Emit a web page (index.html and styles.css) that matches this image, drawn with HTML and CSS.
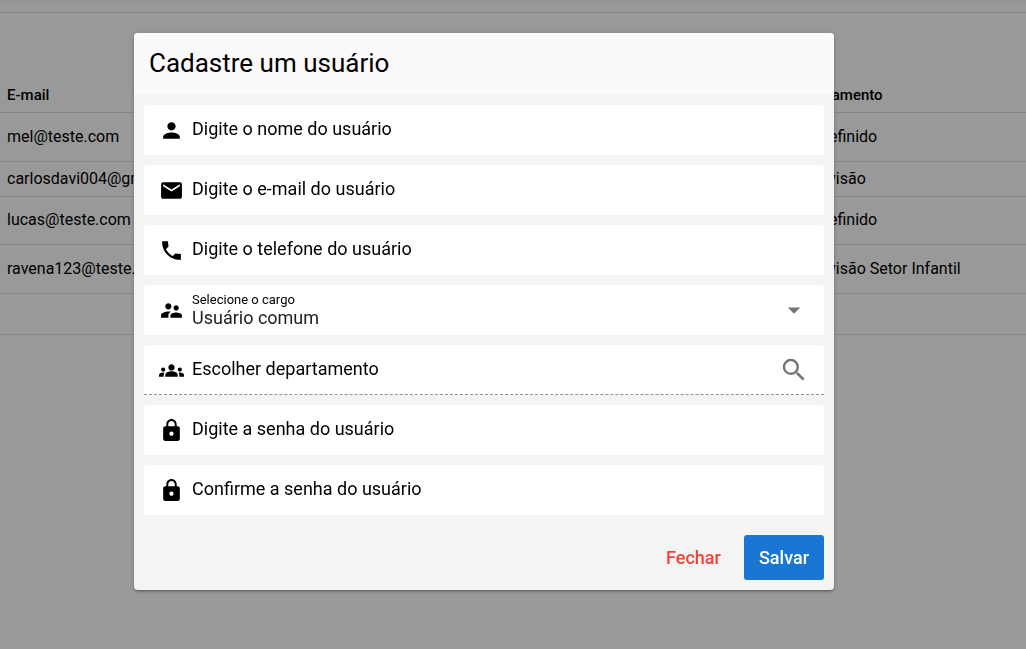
FILE: index.html
```html
<!DOCTYPE html>
<html lang="pt-BR">
<head>
<meta charset="utf-8">
<meta name="viewport" content="width=device-width, initial-scale=1">
<title>Cadastre um usuário</title>
<link rel="stylesheet" href="styles.css">
</head>
<body>
<main class="page">
  <div class="toolbar"></div>
  <table class="users">
    <colgroup><col class="col-email"><col></colgroup>
    <thead>
      <tr><th>E-mail</th><th>Departamento</th></tr>
    </thead>
    <tbody>
      <tr class="tall"><td>mel@teste.com</td><td>Não definido</td></tr>
      <tr class="short"><td>carlosdavi004@gmail.com</td><td>Supervisão</td></tr>
      <tr><td>lucas@teste.com</td><td>Não definido</td></tr>
      <tr class="tall"><td>ravena123@teste.com</td><td>Supervisão Setor Infantil</td></tr>
    </tbody>
  </table>
  <div class="table-footer"></div>
</main>

<div class="backdrop">
  <form class="dialog" role="dialog" aria-labelledby="dialog-title">
    <header class="dialog-header"><h1 id="dialog-title">Cadastre um usuário</h1></header>
    <div class="fields">
      <div class="field">
        <svg class="icon" viewBox="0 0 24 24" aria-hidden="true"><path d="M12 12c2.21 0 4-1.79 4-4s-1.790-4-4-4-4 1.790-4 4 1.790 4 4 4zm0 2c-2.670 0-8 1.340-8 4v2h16v-2c0-2.660-5.330-4-8-4z"/></svg>
        <div class="control"><label for="nome">Digite o nome do usuário</label><input id="nome" type="text"></div>
      </div>
      <div class="field">
        <svg class="icon" viewBox="0 0 24 24" aria-hidden="true"><path d="M20 4H4c-1.100 0-1.990.9-1.990 2L2 18c0 1.100.9 2 2 2h16c1.100 0 2-.9 2-2V6c0-1.100-.9-2-2-2zm0 4l-8 5-8-5V6l8 5 8-5v2z"/></svg>
        <div class="control"><label for="email">Digite o e-mail do usuário</label><input id="email" type="email"></div>
      </div>
      <div class="field">
        <svg class="icon" viewBox="0 0 24 24" aria-hidden="true"><path d="M21 15.460l-5.270-.610-2.520 2.520a15.045 15.045 0 0 1-6.590-6.590l2.530-2.530L8.540 3H3.030C2.450 13.180 10.820 21.550 21 20.970v-5.510z"/></svg>
        <div class="control"><label for="telefone">Digite o telefone do usuário</label><input id="telefone" type="tel"></div>
      </div>
      <div class="field">
        <svg class="icon" viewBox="0 0 24 24" aria-hidden="true"><path d="M16.500 12c1.380 0 2.490-1.120 2.490-2.500S17.880 7 16.500 7 14 8.120 14 9.500s1.120 2.500 2.500 2.500zM9 11c1.660 0 2.990-1.340 2.990-3S10.660 5 9 5 6 6.340 6 8s1.340 3 3 3zm7.500 3c-1.830 0-5.500.920-5.500 2.750V19h11v-2.250c0-1.830-3.670-2.750-5.500-2.750zM9 13c-2.330 0-7 1.170-7 3.500V19h7v-2.250c0-.850.330-2.340 2.370-3.470C10.500 13.100 9.660 13 9 13z"/></svg>
        <div class="choice"><label for="cargo">Selecione o cargo</label>
          <select id="cargo"><option>Usuário comum</option><option>Administrador</option></select>
        </div>
        <svg class="action-icon" viewBox="0 0 24 24" aria-hidden="true"><path d="M7 10l5 5 5-5z"/></svg>
      </div>
      <div class="field readonly">
        <svg class="icon" viewBox="0 0 24 24" aria-hidden="true"><path d="M12 12.750c1.630 0 3.070.390 4.240.9 1.080.480 1.760 1.560 1.760 2.730V18H6v-1.610c0-1.180.680-2.260 1.760-2.730 1.170-.520 2.610-.910 4.240-.910zM4 13c1.100 0 2-.9 2-2s-.9-2-2-2-2 .9-2 2 .9 2 2 2zm1.130 1.100C4.760 14.040 4.390 14 4 14c-.990 0-1.930.210-2.780.580A2.010 2.010 0 0 0 0 16.430V18h4.500v-1.610c0-.830.230-1.610.630-2.290zM20 13c1.100 0 2-.9 2-2s-.9-2-2-2-2 .9-2 2 .9 2 2 2zm4 3.430c0-.810-.480-1.530-1.220-1.850A6.950 6.950 0 0 0 20 14c-.390 0-.760.040-1.130.1.400.680.630 1.460.630 2.290V18H24v-1.570zM12 6c1.660 0 3 1.340 3 3s-1.340 3-3 3-3-1.340-3-3 1.340-3 3-3z"/></svg>
        <div class="control"><label for="departamento">Escolher departamento</label><input id="departamento" type="text" readonly></div>
        <button class="search" type="button" aria-label="Pesquisar departamento"><svg class="action-icon" viewBox="0 0 24 24" aria-hidden="true"><path d="M15.500 14h-.790l-.280-.270A6.471 6.471 0 0 0 16 9.500 6.500 6.500 0 1 0 9.500 16c1.610 0 3.090-.590 4.230-1.570l.270.280v.790l5 4.990L20.490 19l-4.990-5zm-6 0C7.010 14 5 11.990 5 9.500S7.010 5 9.500 5 14 7.010 14 9.500 11.990 14 9.500 14z"/></svg></button>
      </div>
      <div class="field">
        <svg class="icon" viewBox="0 0 24 24" aria-hidden="true"><path d="M18 8h-1V6c0-2.760-2.240-5-5-5S7 3.240 7 6v2H6c-1.100 0-2 .9-2 2v10c0 1.100.9 2 2 2h12c1.100 0 2-.9 2-2V10c0-1.100-.9-2-2-2zm-6 9c-1.100 0-2-.9-2-2s.9-2 2-2 2 .9 2 2-.9 2-2 2zm3.100-9H8.900V6c0-1.710 1.390-3.100 3.100-3.100s3.100 1.390 3.100 3.100v2z"/></svg>
        <div class="control"><label for="senha">Digite a senha do usuário</label><input id="senha" type="password"></div>
      </div>
      <div class="field">
        <svg class="icon" viewBox="0 0 24 24" aria-hidden="true"><path d="M18 8h-1V6c0-2.760-2.240-5-5-5S7 3.240 7 6v2H6c-1.100 0-2 .9-2 2v10c0 1.100.9 2 2 2h12c1.100 0 2-.9 2-2V10c0-1.100-.9-2-2-2zm-6 9c-1.100 0-2-.9-2-2s.9-2 2-2 2 .9 2 2-.9 2-2 2zm3.100-9H8.900V6c0-1.710 1.390-3.100 3.100-3.100s3.100 1.390 3.100 3.100v2z"/></svg>
        <div class="control"><label for="confirma">Confirme a senha do usuário</label><input id="confirma" type="password"></div>
      </div>
    </div>
    <footer class="actions">
      <button class="btn btn-close" type="button">Fechar</button>
      <button class="btn btn-save" type="submit">Salvar</button>
    </footer>
  </form>
</div>
</body>
</html>
```

FILE: styles.css
```css
* { box-sizing: border-box; }

body {
  margin: 0;
  background: #fff;
  color: #000;
  font-family: Roboto, sans-serif;
  font-size: 16px;
}

button, input, select {
  margin: 0;
  padding: 0;
  border: 0;
  background: none;
  color: inherit;
  font: inherit;
}

.toolbar {
  height: 13px;
  border-bottom: 1px solid #dedede;
  background: linear-gradient(#f6f6f6, #fff 3px);
}

.users {
  width: 100%;
  margin-top: 64px;
  table-layout: fixed;
  border-collapse: separate;
  border-spacing: 0;
}

.col-email { width: 76%; }

.users th,
.users td {
  height: 48px;
  padding: 0 7px 2px;
  border-bottom: 1px solid #dedede;
  text-align: left;
  white-space: nowrap;
}

.users th {
  height: 36px;
  padding-bottom: 0;
  font-size: 15px;
  font-weight: 500;
}

.users .tall td { height: 49px; }
.users .short td { height: 35px; }

.table-footer {
  height: 41px;
  border-bottom: 1px solid #dedede;
}

.backdrop {
  position: fixed;
  inset: 0;
  display: flex;
  align-items: flex-start;
  justify-content: center;
  padding: 33px 58px 0 0;
  overflow: auto;
  background: rgba(0, 0, 0, 0.4);
}

.dialog {
  width: 100%;
  max-width: 700px;
  overflow: hidden;
  border-radius: 4px;
  background: #f4f4f4;
  box-shadow: 0 1px 5px rgba(0, 0, 0, 0.2), 0 2px 2px rgba(0, 0, 0, 0.14), 0 3px 1px -2px rgba(0, 0, 0, 0.12);
}

.dialog-header {
  padding: 14px 15px 16px;
  background: #fafafa;
}

.dialog-header h1 {
  margin: 0;
  font-size: 26px;
  font-weight: 400;
  line-height: 32px;
}

.fields {
  display: grid;
  gap: 10px;
  padding: 10px;
}

.field {
  display: flex;
  align-items: center;
  height: 50px;
  padding: 0 15px;
  border-radius: 4px 4px 0 0;
  background: #fff;
}

.readonly { border-bottom: 1px dashed #929292; }

.icon {
  flex: none;
  width: 25px;
  height: 25px;
  margin: 1px 8px 0 0;
}

.action-icon {
  display: block;
  flex: none;
  width: 30px;
  height: 30px;
  fill: #757575;
}

.control {
  display: grid;
  flex: 1;
  align-items: center;
  font-size: 18px;
  line-height: 24px;
}

.control label,
.control input {
  grid-area: 1 / 1;
  min-width: 0;
}

.control label {
  padding-bottom: 2px;
  pointer-events: none;
}

.control input {
  height: 48px;
  outline: 0;
}

.choice {
  display: flex;
  flex: 1;
  flex-direction: column;
  font-size: 18px;
}

.choice label {
  font-size: 13px;
  line-height: 16px;
}

.choice select {
  appearance: none;
  height: 20px;
  color: #212121;
  line-height: 20px;
}

.search { cursor: pointer; }

.actions {
  display: flex;
  justify-content: flex-end;
  gap: 8px;
  padding: 10px;
}

.btn {
  height: 45px;
  padding: 0 15px;
  border-radius: 3px;
  font-size: 18px;
  font-weight: 500;
  cursor: pointer;
}

.btn-close { color: #f44336; }

.btn-save {
  background: #1976d2;
  color: #fff;
}
```
